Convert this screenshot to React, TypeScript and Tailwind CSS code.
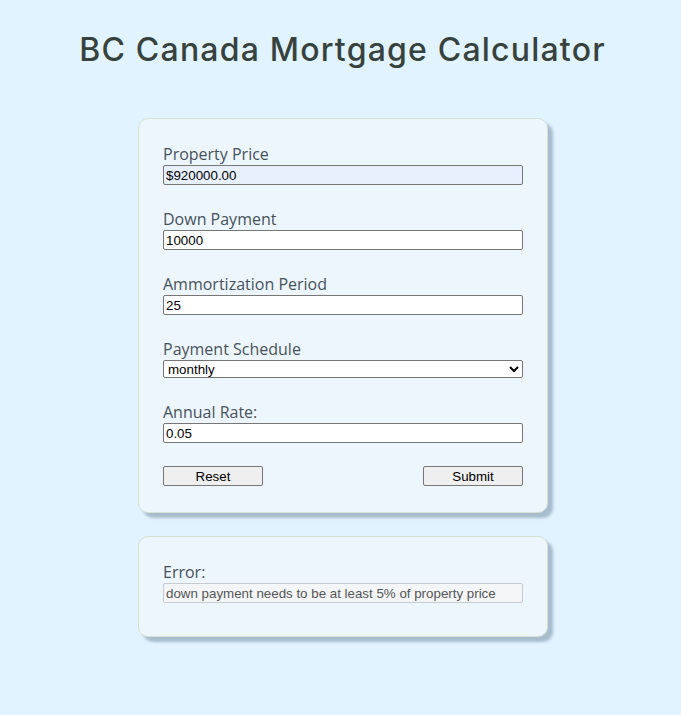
import React from "react";

const labelCls =
  "block text-[16px] leading-[22px] text-[#46525b] font-['Open_Sans',sans-serif]";
const inputCls =
  "block w-[360px] h-[20px] border border-[#767676] rounded-[2px] px-[2px] text-[13.33px] text-black font-['Liberation_Sans',Arial,sans-serif] outline-none";

function Field({ label, children }: { label: string; children: React.ReactNode }) {
  return (
    <div className="mb-[23px]">
      <label className={labelCls}>{label}</label>
      {children}
    </div>
  );
}

export default function App() {
  return (
    <div className="min-h-[715px] w-full bg-[#e1f3fe] pt-[28px] pb-[60px]">
      <h1 className="pl-[4px] text-center text-[32px] leading-[44px] font-medium text-[#37423e] font-['Inter',sans-serif] tracking-[1.2px]">
        BC Canada Mortgage Calculator
      </h1>
      <div className="mt-[46px] pl-[5px] flex flex-col items-center gap-[23px]">
        <div className="w-[410px] rounded-[10px] border border-[#d3e2d2] bg-[#eef6fd] px-[24px] pt-[24px] pb-[26px] shadow-[5px_5px_3px_#a7bccd]">
          <Field label="Property Price">
            <input className={inputCls + " bg-[#e8f0fe]"} defaultValue="$920000.00" />
          </Field>
          <Field label="Down Payment">
            <input className={inputCls + " bg-white"} defaultValue="10000" />
          </Field>
          <Field label="Ammortization Period">
            <input className={inputCls + " bg-white"} defaultValue="25" />
          </Field>
          <Field label="Payment Schedule">
            <select
              className="block w-[360px] h-[18px] border border-[#767676] rounded-[2px] bg-white text-[13.33px] text-black font-['Liberation_Sans',Arial,sans-serif] outline-none"
              defaultValue="monthly"
            >
              <option value="monthly">monthly</option>
              <option value="biweekly">bi-weekly</option>
              <option value="weekly">weekly</option>
            </select>
          </Field>
          <Field label="Annual Rate:">
            <input className={inputCls + " bg-white"} defaultValue="0.05" />
          </Field>
          <div className="flex justify-between">
            <button className="w-[100px] h-[20px] border border-[#767676] rounded-[2px] bg-[#efefef] text-[13.33px] text-black font-['Liberation_Sans',Arial,sans-serif]">
              Reset
            </button>
            <button className="w-[100px] h-[20px] border border-[#767676] rounded-[2px] bg-[#efefef] text-[13.33px] text-black font-['Liberation_Sans',Arial,sans-serif]">
              Submit
            </button>
          </div>
        </div>
        <div className="w-[410px] rounded-[10px] border border-[#d3e2d2] bg-[#eef6fd] px-[24px] pt-[24px] pb-[33px] shadow-[5px_5px_3px_#a7bccd]">
          <label className={labelCls}>Error:</label>
          <input
            readOnly
            className="block w-[360px] h-[20px] border border-[#c5cad0] rounded-[2px] bg-[#f3f5f7] px-[2px] text-[13.33px] text-[#555] font-['Liberation_Sans',Arial,sans-serif] outline-none"
            defaultValue="down payment needs to be at least 5% of property price"
          />
        </div>
      </div>
    </div>
  );
}
